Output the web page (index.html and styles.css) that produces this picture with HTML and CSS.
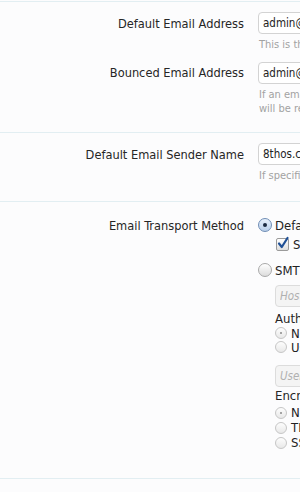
FILE: index.html
```html
<!DOCTYPE html>
<html lang="en">
<head>
    <meta charset="UTF-8">
    <meta name="viewport" content="width=device-width, initial-scale=1.0">
    <title>Email Options</title>
    <link rel="stylesheet" href="styles.css">
</head>
<body>
    <div class="options">
        <div class="section first">
            <div class="row">
                <div class="label">Default Email Address</div>
                <div class="value">
                    <input class="textbox" type="text" value="admin@8thos.com">
                    <p class="hint">This is the email address that emails will be sent from.</p>
                </div>
            </div>
            <div class="row next">
                <div class="label">Bounced Email Address</div>
                <div class="value">
                    <input class="textbox" type="text" value="admin@8thos.com">
                    <p class="hint">If an email cannot be delivered, a message<br>will be returned to this address.</p>
                </div>
            </div>
        </div>

        <div class="section second">
            <div class="row">
                <div class="label">Default Email Sender Name</div>
                <div class="value">
                    <input class="textbox" type="text" value="8thos.com">
                    <p class="hint">If specified, this name will be used as the sender.</p>
                </div>
            </div>
        </div>

        <div class="section third">
            <div class="row">
                <div class="label">Email Transport Method</div>
                <div class="value">
                    <label class="choice big">
                        <span class="radio checked"></span>Default
                    </label>
                    <label class="choice check">
                        <span class="checkbox">
                            <svg width="14" height="14" viewBox="0 0 14 14">
                                <path d="M3 7.5 L5.8 11 L11.5 2" fill="none" stroke="#1f4f95" stroke-width="2.2" stroke-linecap="round" stroke-linejoin="round"/>
                            </svg>
                        </span>Send via the default mail function
                    </label>
                    <label class="choice big smtp">
                        <span class="radio"></span>SMTP
                    </label>
                    <div class="sub">
                        <input class="textbox disabled" type="text" placeholder="Host">
                        <div class="sub-title">Authentication</div>
                        <label class="choice small"><span class="radio mini checked"></span>None</label>
                        <label class="choice small"><span class="radio mini"></span>Username and password</label>
                        <input class="textbox disabled user" type="text" placeholder="Username">
                        <div class="sub-title encr">Encryption</div>
                        <label class="choice small wide"><span class="radio mini checked"></span>None</label>
                        <label class="choice small wide"><span class="radio mini"></span>TLS</label>
                        <label class="choice small wide"><span class="radio mini"></span>SSL</label>
                    </div>
                </div>
            </div>
        </div>

        <div class="section last"></div>
    </div>
</body>
</html>
```

FILE: styles.css
```css
body {
    margin: 0;
    padding-top: 1px;
    width: 300px;
    height: 491px;
    overflow: hidden;
    background-color: #fcfcfd;
    font-family: "DejaVu Sans", Verdana, sans-serif;
    font-stretch: condensed;
    color: #262626;
}
.options {
    width: 600px;
}
.section {
    border-top: 1px solid #e2eef2;
}
.first {
    padding: 10px 0 16px;
}
.second {
    padding: 10px 0 18px;
}
.third {
    height: 277px;
    padding-top: 12px;
    box-sizing: border-box;
}
.row {
    display: flex;
}
.row.next {
    margin-top: 10px;
}
.label {
    width: 244px;
    flex-shrink: 0;
    padding-top: 1px;
    text-align: right;
    font-size: 12.7px;
    line-height: 22px;
}
.row.next .label {
    padding-top: 0;
}
.value {
    margin-left: 14px;
    width: 320px;
}
.textbox {
    display: block;
    box-sizing: border-box;
    width: 300px;
    height: 22px;
    margin: 0;
    padding: 0 4px;
    border: 1px solid #d3d3d3;
    border-radius: 4px;
    background-color: #fff;
    font-family: "DejaVu Sans", Verdana, sans-serif;
    font-stretch: condensed;
    font-size: 11.5px;
    color: #222;
}
.textbox.disabled {
    background-color: #f4f4f4;
    border-color: #dcdcdc;
}
.textbox::placeholder {
    color: #b0b0b0;
    font-style: italic;
}
.hint {
    margin: 4px 0 0 1px;
    font-size: 11px;
    line-height: 14px;
    color: #a2a2a2;
}
.choice {
    display: flex;
    align-items: center;
    font-size: 13px;
    color: #222;
}
.choice.big {
    height: 22px;
}
.choice.check {
    height: 16px;
    margin: 0 0 7px 18px;
}
.choice.small {
    height: 14px;
}
.choice.wide {
    height: 15px;
}
.radio {
    width: 12px;
    height: 12px;
    margin-right: 3px;
    flex-shrink: 0;
    border: 1px solid #a9a9a9;
    border-radius: 50%;
    background: linear-gradient(#ffffff, #dcdcdc);
    position: relative;
}
.radio.checked {
    border-color: #6f8db5;
    background: linear-gradient(#e7f0fb, #b9cfea);
}
.radio.checked::after {
    content: "";
    position: absolute;
    left: 4px;
    top: 4px;
    width: 4px;
    height: 4px;
    border-radius: 50%;
    background-color: #1b2a40;
}
.radio.mini {
    width: 10px;
    height: 10px;
    margin-right: 4px;
    border-color: #c6c6c6;
    background: linear-gradient(#fdfdfd, #e8e8e8);
}
.radio.mini.checked::after {
    left: 4px;
    top: 4px;
    width: 2px;
    height: 2px;
    background-color: #8a8a8a;
}
.checkbox {
    position: relative;
    width: 11px;
    height: 11px;
    margin-right: 4px;
    border: 1px solid #9a9a9a;
    border-radius: 2px;
    background: linear-gradient(#ffffff, #dedede);
}
.checkbox svg {
    position: absolute;
    left: -1px;
    top: -3px;
}
.sub {
    margin: 4px 0 0 17px;
}
.sub .textbox {
    width: 200px;
}
.sub-title {
    margin-top: 5px;
    font-size: 13px;
    line-height: 14px;
}
.sub .user {
    margin-top: 11px;
}
.sub-title.encr {
    margin-top: 2px;
    margin-bottom: 2px;
}
```
